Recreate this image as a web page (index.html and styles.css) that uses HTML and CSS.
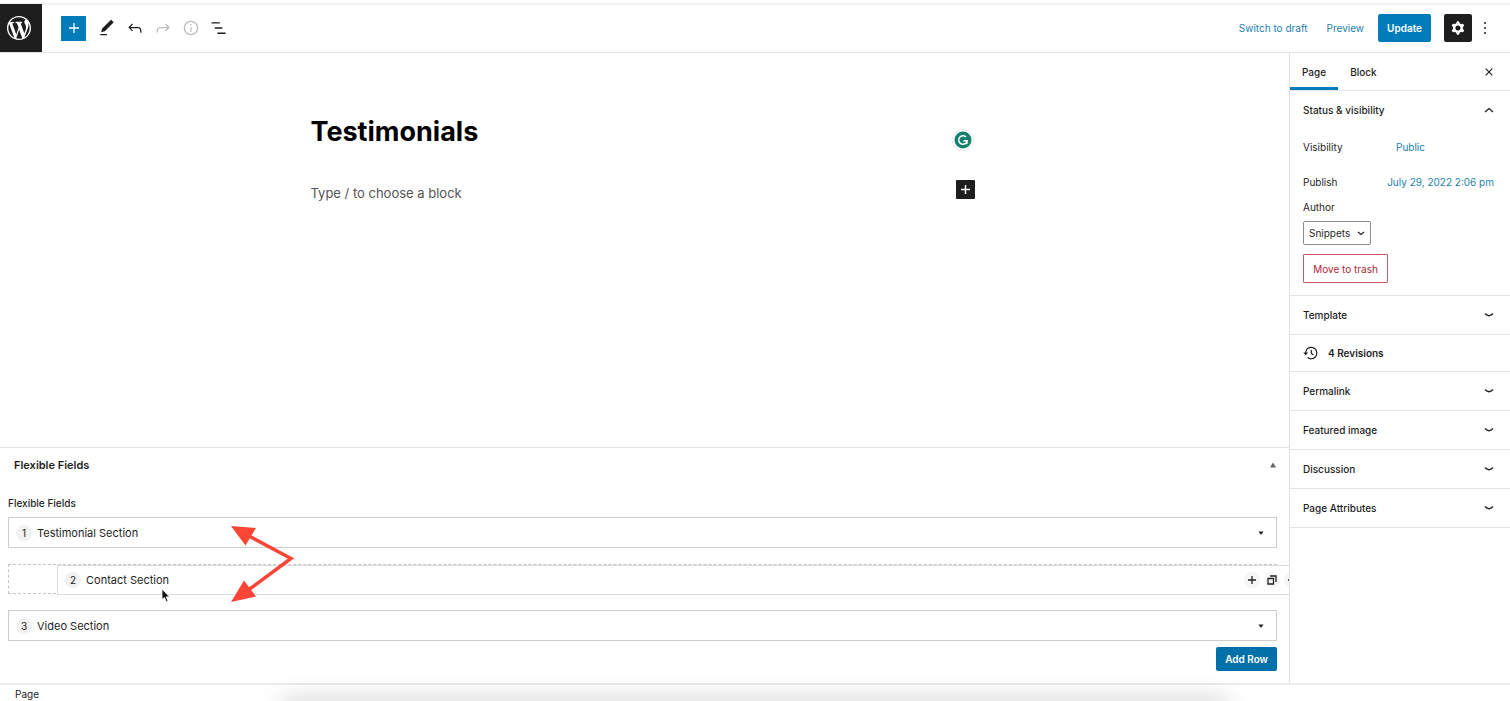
FILE: index.html
```html
<!DOCTYPE html>
<html lang="en">
<head>
<meta charset="utf-8">
<title>Edit Page</title>
<link rel="stylesheet" href="styles.css">
</head>
<body>
<header class="topbar">
  <a class="site-logo" href="#" aria-label="View pages">
    <svg width="24" height="24" viewBox="0 0 20 20" fill="currentColor"><path d="M20 10c0-5.51-4.49-10-10-10C4.48 0 0 4.49 0 10c0 5.52 4.48 10 10 10 5.51 0 10-4.48 10-10zM7.78 15.37L4.37 6.22c.55-.02 1.17-.08 1.17-.08.5-.06.44-1.13-.06-1.11 0 0-1.45.11-2.37.11-.18 0-.37 0-.58-.01C4.12 2.69 6.87 1.11 10 1.11c2.33 0 4.45.87 6.05 2.34-.68-.11-1.65.39-1.65 1.58 0 .74.45 1.36.9 2.1.35.61.55 1.36.55 2.46 0 1.49-1.4 5-1.4 5l-3.03-8.37c.54-.02.82-.17.82-.17.5-.05.44-1.25-.06-1.22 0 0-1.44.12-2.38.12-.87 0-2.33-.12-2.33-.12-.5-.03-.56 1.2-.06 1.22l.92.08 1.26 3.41zM17.41 10c.24-.64.74-1.87.43-4.25.7 1.29 1.05 2.71 1.05 4.25 0 3.29-1.73 6.24-4.4 7.78.97-2.59 1.94-5.2 2.92-7.78zM6.1 18.09C3.12 16.65 1.11 13.53 1.11 10c0-1.3.23-2.48.72-3.59C3.25 10.3 4.67 14.2 6.1 18.09zm4.03-6.63l2.58 6.98c-.86.29-1.76.45-2.71.45-.79 0-1.57-.11-2.29-.33.81-2.38 1.62-4.74 2.42-7.1z"/></svg>
  </a>
  <div class="tools">
    <button class="tool tool-add" type="button" aria-label="Add block"><svg width="20" height="20" viewBox="0 0 24 24" fill="currentColor"><path d="M18 11.2h-5.2V6h-1.6v5.2H6v1.6h5.2V18h1.6v-5.2H18z"/></svg></button>
    <button class="tool" type="button" aria-label="Tools"><svg width="20" height="20" viewBox="0 0 24 24" fill="currentColor"><path d="M20.1 5.1L16.9 2 6.2 12.7l-1.3 4.4 4.5-1.3L20.1 5.1zM4 20.8h8v-1.5H4v1.5z"/></svg></button>
    <button class="tool" type="button" aria-label="Undo"><svg width="20" height="20" viewBox="0 0 24 24" fill="currentColor"><path d="M18.3 11.7c-.6-.6-1.4-.9-2.3-.9H6.7l2.9-3.3-1.1-1-4.5 5L8.500 16l1-1-2.700-2.700H16c.5 0 .9.2 1.300.5 1 1 1 3.400 1 4.500v.3h1.500v-.2c0-1.500 0-4.300-1.500-5.700z"/></svg></button>
    <button class="tool" type="button" aria-label="Redo" disabled><svg width="20" height="20" viewBox="0 0 24 24" fill="currentColor"><path d="M15.600 6.500l-1.100 1 2.900 3.300H8c-.9 0-1.700.3-2.300.9-1.400 1.500-1.400 4.200-1.400 5.600v.2h1.500v-.3c0-1.100 0-3.500 1-4.500.3-.3.7-.5 1.300-.5h9.200L14.500 15l1.100 1.100 4.600-4.600-4.600-5z"/></svg></button>
    <button class="tool" type="button" aria-label="Details" disabled><svg width="20" height="20" viewBox="0 0 24 24" fill="none" stroke="currentColor" stroke-width="1.500"><circle cx="12" cy="12" r="8"/><path d="M12 11v5.500M12 7.300v1.700"/></svg></button>
    <button class="tool" type="button" aria-label="List view"><svg width="20" height="20" viewBox="0 0 24 24" fill="currentColor"><path d="M3 5h10v1.700H3zM7 11.200h9v1.700H7zM10 17.500h10v1.700H10z"/></svg></button>
  </div>
  <div class="actions">
    <button class="link-button" type="button">Switch to draft</button>
    <button class="link-button" type="button">Preview</button>
    <button class="primary" type="button">Update</button>
    <button class="settings" type="button" aria-label="Settings"><svg width="20" height="20" viewBox="0 0 24 24" fill="currentColor"><path fill-rule="evenodd" d="M10.289 4.836A1 1 0 0111.275 4h1.306a1 1 0 01.987.836l.244 1.466c.787.26 1.503.679 2.108 1.218l1.393-.522a1 1 0 011.216.437l.653 1.130a1 1 0 01-.23 1.273l-1.148.944a6.025 6.025 0 010 2.435l1.149.946a1 1 0 01.23 1.272l-.653 1.130a1 1 0 01-1.216.437l-1.394-.522c-.605.54-1.320.958-2.108 1.218l-.244 1.466a1 1 0 01-.987.836h-1.306a1 1 0 01-.986-.836l-.244-1.466a5.995 5.995 0 01-2.108-1.218l-1.394.522a1 1 0 01-1.217-.436l-.653-1.131a1 1 0 01.23-1.272l1.149-.946a6.026 6.026 0 010-2.435l-1.148-.944a1 1 0 01-.23-1.272l.653-1.131a1 1 0 011.217-.437l1.393.522a5.994 5.994 0 012.108-1.218l.244-1.466zM14.929 12a3 3 0 11-6 0 3 3 0 016 0z"/></svg></button>
    <button class="more" type="button" aria-label="Options"><svg width="4" height="14" viewBox="0 0 4 14" fill="currentColor"><circle cx="2" cy="2" r="1"/><circle cx="2" cy="7" r="1"/><circle cx="2" cy="12" r="1"/></svg></button>
  </div>
</header>

<div class="workspace">
  <main class="content">
    <section class="canvas">
      <div class="post">
        <div class="post-line">
          <h1 class="post-title">Testimonials</h1>
          <button class="grammar" type="button" aria-label="Check grammar"><svg width="22" height="22" viewBox="0 0 22 22"><circle cx="11" cy="11" r="10.500" fill="#fff" stroke="#e6e6e6"/><circle cx="11" cy="11" r="8.500" fill="#15806d"/><path d="M14 7.900A4.300 4.300 0 1 0 15.200 11.700H11.500" fill="none" stroke="#fff" stroke-width="1.500"/><path d="M15.200 11.500v3.200h-2.500" fill="none" stroke="#fff" stroke-width="1"/></svg></button>
        </div>
        <div class="post-line">
          <p class="prompt">Type / to choose a block</p>
          <button class="inserter" type="button" aria-label="Add block"><svg width="19" height="19" viewBox="0 0 19 19"><path d="M9.500 5v9M5 9.500h9" stroke="#fff" stroke-width="1.400"/></svg></button>
        </div>
      </div>
    </section>

    <section class="metabox">
      <div class="metabox-head">
        <h2 class="metabox-title">Flexible Fields</h2>
        <button class="plain" type="button" aria-label="Toggle panel"><svg width="8" height="6" viewBox="0 0 8 6"><path d="M4 0.500L7 5.500H1z" fill="#666"/></svg></button>
      </div>
      <h3 class="field-label">Flexible Fields</h3>
      <div class="rows">
        <div class="row">
          <span class="number">1</span><span class="row-name">Testimonial Section</span>
          <button class="plain row-toggle" type="button" aria-label="Expand row"><svg width="6" height="4" viewBox="0 0 6 4"><path d="M0.500 0.500h5L3 4z" fill="#222"/></svg></button>
        </div>
        <div class="drop-slot">
          <div class="row dragged">
            <span class="number">2</span><span class="row-name">Contact Section</span>
            <span class="row-tools">
              <button class="round" type="button" aria-label="Add row"><svg width="10" height="10" viewBox="0 0 10 10"><path d="M5 1v8M1 5h8" stroke="#222" stroke-width="1.300"/></svg></button>
              <button class="round" type="button" aria-label="Duplicate row"><svg width="10" height="10" viewBox="0 0 10 10" fill="none" stroke="#222" stroke-width="1.300"><path d="M1 3.500h5.500V9H1z"/><path d="M3 1h6v6"/></svg></button>
              <button class="round" type="button" aria-label="Remove row"><svg width="10" height="10" viewBox="0 0 10 10"><path d="M1 5h8" stroke="#222" stroke-width="1.500"/></svg></button>
            </span>
          </div>
        </div>
        <div class="row">
          <span class="number">3</span><span class="row-name">Video Section</span>
          <button class="plain row-toggle" type="button" aria-label="Expand row"><svg width="6" height="4" viewBox="0 0 6 4"><path d="M0.500 0.500h5L3 4z" fill="#222"/></svg></button>
        </div>
        <svg class="arrows" width="64" height="80" viewBox="0 0 64 80"><path d="M16 11L60 34.500L16 67" fill="none" stroke="#fb4636" stroke-width="3.500"/><path d="M0 2L25 4L14.500 21.500zM0 78L13 56.500L25 72.500z" fill="#fb4636"/></svg>
        <svg class="pointer" width="10" height="15" viewBox="0 0 10 15"><path d="M1 1v10.500l2.400-2 1.900 4.300 1.700-.8-1.800-4.100h3.300z" fill="#111" stroke="#fff" stroke-width=".8"/></svg>
      </div>
      <div class="metabox-foot"><button class="primary add-row" type="button">Add Row</button></div>
    </section>
  </main>

  <aside class="sidebar">
    <div class="tabs">
      <button class="tab tab-active" type="button">Page</button>
      <button class="tab" type="button">Block</button>
      <button class="plain close" type="button" aria-label="Close settings"><svg width="8" height="8" viewBox="0 0 8 8"><path d="M.7.7l6.600 6.600M7.300.7L.7 7.300" stroke="#222" stroke-width="1.200"/></svg></button>
    </div>
    <section class="status">
      <button class="panel-toggle" type="button">Status &amp; visibility<svg width="10" height="6" viewBox="0 0 10 6"><path d="M1 5l4-3.500L9 5" fill="none" stroke="#222" stroke-width="1.300"/></svg></button>
      <div class="setting"><span>Visibility</span><button class="link-button value-short" type="button">Public</button></div>
      <div class="setting"><span>Publish</span><button class="link-button" type="button">July 29, 2022 2:06 pm</button></div>
      <label class="author-label" for="author">Author</label>
      <div class="select-wrap">
        <select id="author" class="author"><option>Snippets</option></select>
        <svg class="select-arrow" width="8" height="5" viewBox="0 0 8 5"><path d="M1 1l3 2.500L7 1" fill="none" stroke="#222" stroke-width="1.200"/></svg>
      </div>
      <button class="trash" type="button">Move to trash</button>
    </section>
    <button class="panel-toggle panel" type="button">Template<svg width="10" height="6" viewBox="0 0 10 6"><path d="M1 1.500Q5 6 9 1.500" fill="none" stroke="#222" stroke-width="1.400"/></svg></button>
    <a class="panel revisions" href="#"><svg width="16" height="14" viewBox="0 0 16 14" fill="none" stroke="#222" stroke-width="1.200"><path d="M3.500 3.700A5.700 5.700 0 1 1 4.500 11.500"/><path d="M8.300 4v3.300l2 1.700"/><path d="M.3 6.500h4.800L2.700 9.500z" fill="#222" stroke="none"/><path d="M2.700 7c0-1.300.4-2.500 1.100-3.500"/></svg>4 Revisions</a>
    <button class="panel-toggle panel" type="button">Permalink<svg width="10" height="6" viewBox="0 0 10 6"><path d="M1 1.500Q5 6 9 1.500" fill="none" stroke="#222" stroke-width="1.400"/></svg></button>
    <button class="panel-toggle panel" type="button">Featured image<svg width="10" height="6" viewBox="0 0 10 6"><path d="M1 1.500Q5 6 9 1.500" fill="none" stroke="#222" stroke-width="1.400"/></svg></button>
    <button class="panel-toggle panel" type="button">Discussion<svg width="10" height="6" viewBox="0 0 10 6"><path d="M1 1.500Q5 6 9 1.500" fill="none" stroke="#222" stroke-width="1.400"/></svg></button>
    <button class="panel-toggle panel" type="button">Page Attributes<svg width="10" height="6" viewBox="0 0 10 6"><path d="M1 1.500Q5 6 9 1.500" fill="none" stroke="#222" stroke-width="1.400"/></svg></button>
  </aside>
</div>
<footer class="breadcrumb">Page</footer>
<div class="bottom-shade"></div>
</body>
</html>
```

FILE: styles.css
```css
* { box-sizing: border-box; }
body {
  margin: 0;
  height: 100vh;
  padding-top: 3px;
  display: flex;
  flex-direction: column;
  overflow: hidden;
  background: #fff;
  color: #1e1e1e;
  font: 10px/16px Inter, "Liberation Sans", sans-serif;
}
button, select { font: inherit; color: inherit; margin: 0; }
button { padding: 0; border: 0; background: none; }
svg { display: block; flex: none; }
h1, h2, h3, p { margin: 0; }

.topbar {
  display: flex;
  align-items: center;
  border-top: 2px solid #f0f0f0;
  border-bottom: 1px solid #e4e4e4;
  flex: none;
}
.site-logo {
  width: 42px;
  height: 48px;
  margin-top: -1px;
  padding-left: 7px;
  display: flex;
  align-items: center;
  background: #1e1e1e;
  color: #fff;
}
.tools { display: flex; align-items: center; gap: 3px; margin-left: 19px; padding-bottom: 1px; }
.tool { width: 25px; height: 25px; display: grid; place-items: center; }
.tool:disabled { color: #bbb; }
.tool-add { background: #007cba; color: #fff; margin-right: 5px; }
.actions { display: flex; align-items: center; margin-left: auto; gap: 13px; padding: 0 23px 1px 0; }
.link-button { color: #1c7fae; }
.actions .link-button { margin-right: 6px; }
.primary { height: 28px; padding: 0 9px; border-radius: 2px; background: #007cba; color: #fff; font-weight: 600; }
.actions .link-button + .primary { margin-left: -5px; }
.settings { width: 28px; height: 28px; background: #1e1e1e; color: #fff; border-radius: 2px; display: grid; place-items: center; }
.more { margin-left: -2px; }

.workspace { flex: 1; min-height: 0; display: grid; grid-template-columns: minmax(0, 1fr) 221px; }
.content { display: flex; flex-direction: column; overflow: hidden; min-width: 0; }
.canvas { flex: 1; padding: 60px 4px 0 0; }
.post { width: 664px; max-width: 100%; margin: 0 auto; }
.post-line { display: flex; justify-content: space-between; align-items: center; }
.post-title { font-size: 27px; line-height: 38px; font-weight: 700; color: #000; }
.grammar { margin: 16px 1px 0 0; }
.prompt { font-size: 13px; line-height: 20px; color: #555; padding-top: 7px; }
.post-line + .post-line { margin-top: 25px; }
.inserter { background: #1e1e1e; border-radius: 1px; }

.metabox { border-top: 1px solid #e2e2e2; padding: 0 12px 12px 8px; }
.metabox-head { display: flex; align-items: center; justify-content: space-between; padding: 9px 0 0 6px; }
.metabox-title { font-size: 11px; line-height: 16px; font-weight: 600; }
.field-label { margin: 22px 0 6px; font-size: 10px; line-height: 16px; font-weight: 500; }
.rows { position: relative; display: flex; flex-direction: column; gap: 16px; font-size: 11px; }
.row { height: 31px; display: flex; align-items: center; padding: 0 12px 0 7px; border: 1px solid #ccc; background: #fff; }
.row-toggle { margin-left: auto; }
.number { width: 16px; height: 16px; border-radius: 50%; background: #f1f1f1; text-align: center; font-size: 10px; margin-right: 5px; }
.drop-slot { position: relative; height: 30px; border: 1px dashed #c4c4c4; }
.dragged { position: absolute; top: 0; left: 48px; width: 100%; border-color: #ddd; height: 30px; }
.row-tools { position: absolute; left: 1186px; display: flex; gap: 4px; }
.round { width: 16px; height: 16px; border-radius: 50%; background: #f6f6f6; display: grid; place-items: center; }
.arrows { position: absolute; left: 223px; top: 7px; }
.pointer { position: absolute; left: 153px; top: 71px; }
.metabox-foot { display: flex; justify-content: flex-end; padding-top: 6px; }
.add-row { height: 24px; background: #0071a8; }

.sidebar { border-left: 1px solid #e0e0e0; overflow: hidden; }
.tabs { display: flex; height: 38px; border-bottom: 1px solid #e4e4e4; padding-right: 17px; }
.tab { padding: 0 12px; font-weight: 500; border-bottom: 3px solid transparent; border-top: 3px solid transparent; }
.tab-active { border-bottom-color: #007cba; }
.close { margin-left: auto; }
.status { padding: 0 16px 12px 13px; border-bottom: 1px solid #e4e4e4; }
.panel-toggle { width: 100%; height: 38px; display: flex; align-items: center; justify-content: space-between; font-weight: 500; }
.setting { display: flex; justify-content: space-between; align-items: center; height: 35px; }
.value-short { margin-right: 69px; }
.author-label { display: block; }
.select-wrap { position: relative; width: 68px; margin: 6px 0 9px; }
.author { display: block; width: 100%; height: 24px; padding: 0 0 0 5px; border: 1px solid #8c8c8c; border-radius: 2px; background: #fff; appearance: none; }
.select-arrow { position: absolute; right: 6px; top: 10px; pointer-events: none; }
.trash { width: 85px; height: 29px; border: 1px solid #ca5a63; color: #b32638; border-radius: 1px; }
.panel { height: 39px; padding: 0 16px 0 13px; border-bottom: 1px solid #e4e4e4; }
.revisions { display: flex; align-items: center; gap: 9px; height: 37px; color: inherit; text-decoration: none; font-weight: 600; }

.breadcrumb { flex: none; height: 18px; padding: 1px 15px; border-top: 2px solid #ececec; }
.bottom-shade { position: fixed; left: 284px; right: 284px; bottom: -12px; height: 12px; box-shadow: 0 0 24px 2px rgba(0, 0, 0, .2); pointer-events: none; }
```
